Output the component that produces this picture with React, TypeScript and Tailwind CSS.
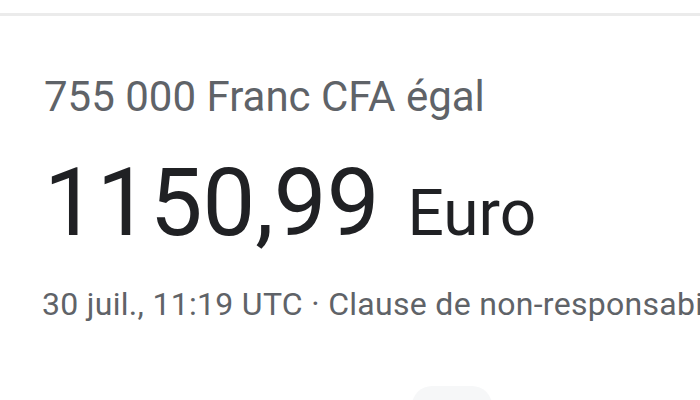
export default function App() {
  return (
    <div className="w-[700px] h-[400px] bg-white overflow-hidden relative" style={{ fontFamily: 'Roboto, "Liberation Sans", sans-serif' }}>
      <div className="h-[13px]" />
      <div className="h-[3px] bg-[#ebebeb]" />
      <div className="pl-[44px] pt-[57px] text-[#5f6368]">
        <div className="text-[42px] leading-[48px] whitespace-nowrap">755 000 Franc CFA égal</div>
      </div>
      <div className="pl-[44px] mt-[32px] flex items-baseline text-[#202124] whitespace-nowrap">
        <span className="text-[94px] leading-[100px]">1150,99</span>
        <span className="text-[64px] leading-[70px] ml-[28px]">Euro</span>
      </div>
      <div className="pl-[42px] mt-[33px] text-[#5f6368] text-[32px] leading-[36px] tracking-[0.3px] whitespace-nowrap overflow-hidden">
        30 juil., 11:19 UTC · Clause de non-responsabi
      </div>
      <div className="absolute left-[412px] top-[386px] w-[80px] h-[40px] rounded-[20px] bg-[#f6f7f8]" />
    </div>
  );
}
